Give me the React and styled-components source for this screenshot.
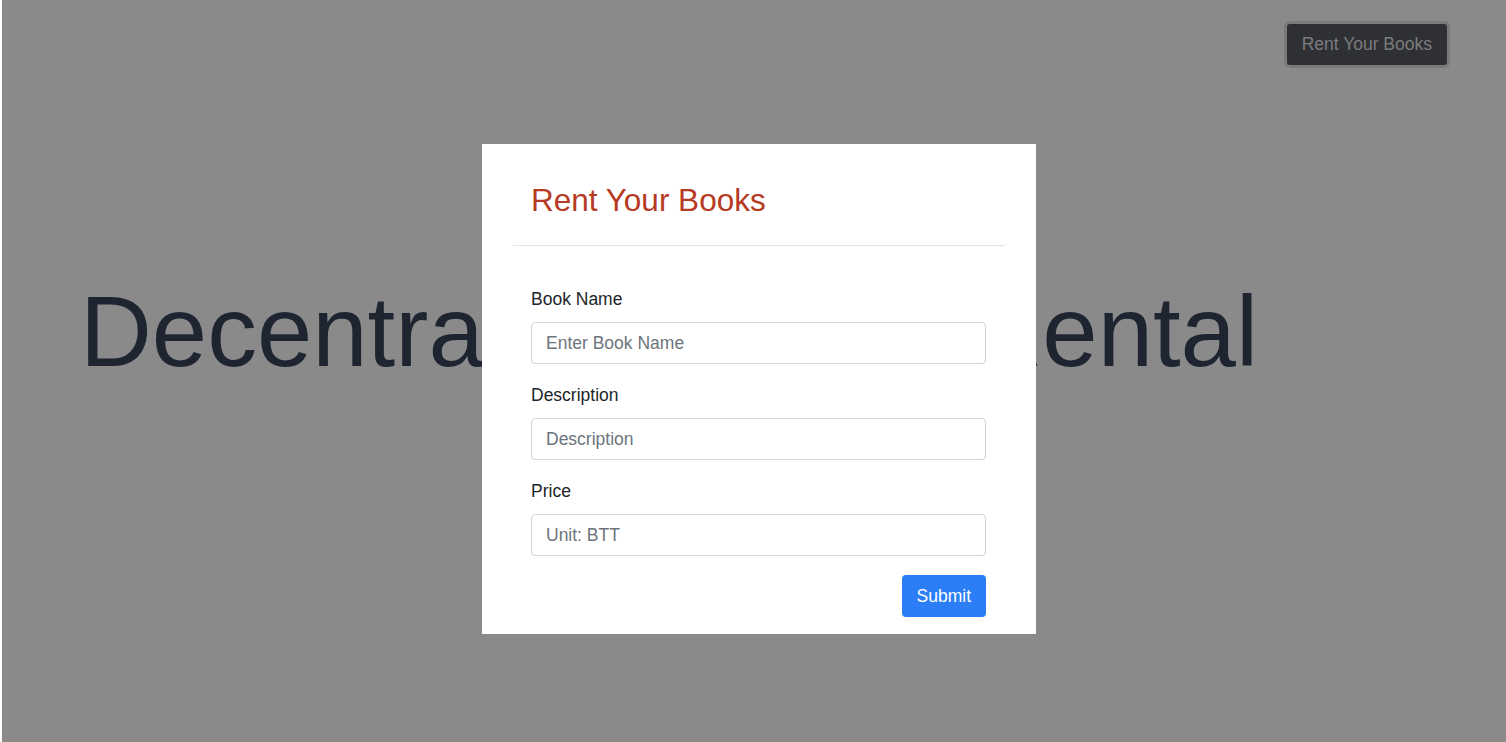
import React from "react";
import styled, { createGlobalStyle } from "styled-components";

const Global = createGlobalStyle`
  html, body { margin: 0; padding: 0; }
  body {
    font-family: "Liberation Sans", Arial, Helvetica, sans-serif;
    background: #ffffff;
  }
  * { box-sizing: border-box; }
`;

const Page = styled.div`
  position: relative;
  min-height: 742px;
  margin-left: 2px;
  background: #8a8a8a;
  display: flex;
  flex-direction: column;
  overflow: hidden;
`;

const TopBar = styled.header`
  display: flex;
  justify-content: flex-end;
  padding: 21px 56px 0 0;
`;

const NavButton = styled.button`
  height: 47px;
  padding: 0 15px;
  border: 3px solid #7a7a7a;
  border-radius: 6px;
  background: #2e3034;
  color: #7c7c7d;
  font-family: inherit;
  font-size: 17.5px;
`;

const Hero = styled.h1`
  margin: 214px 0 0 78px;
  font-weight: 400;
  font-size: 99.5px;
  line-height: 1;
  color: #1e2530;
  white-space: nowrap;
`;

const Overlay = styled.div`
  position: absolute;
  inset: 0;
  display: flex;
  justify-content: center;
  align-items: flex-start;
  padding-top: 144px;
  padding-left: 10px;
`;

const Modal = styled.div`
  width: 554px;
  background: #ffffff;
  display: flex;
  flex-direction: column;
`;

const ModalHeader = styled.div`
  margin: 0 31px;
  padding: 37px 18px 26px;
  border-bottom: 1px solid #e3e3e3;
`;

const Title = styled.h2`
  margin: 0;
  font-weight: 400;
  font-size: 31.5px;
  line-height: 38px;
  color: #b73a22;
`;

const Body = styled.form`
  padding: 42px 50px 17px 49px;
  display: flex;
  flex-direction: column;
`;

const Field = styled.div`
  display: flex;
  flex-direction: column;
  margin-bottom: 20px;
`;

const Label = styled.label`
  font-size: 17.5px;
  line-height: 22px;
  color: #212529;
  margin-bottom: 12px;
`;

const Input = styled.input`
  height: 42px;
  width: 100%;
  padding: 0 14px;
  border: 1px solid #ced4da;
  border-radius: 4px;
  font-family: inherit;
  font-size: 17.5px;
  color: #495057;
  background: #fff;
  &::placeholder { color: #6c757d; }
`;

const Actions = styled.div`
  display: flex;
  justify-content: flex-end;
  margin-top: -1px;
`;

const Submit = styled.button`
  height: 42px;
  padding: 0 15px;
  border: none;
  border-radius: 4px;
  background: #2b7ef6;
  color: #fff;
  font-family: inherit;
  font-size: 17.5px;
`;

const fields = [
  { label: "Book Name", placeholder: "Enter Book Name" },
  { label: "Description", placeholder: "Description" },
  { label: "Price", placeholder: "Unit: BTT" },
];

export default function App() {
  return (
    <>
      <Global />
      <Page>
        <TopBar>
          <NavButton>Rent Your Books</NavButton>
        </TopBar>
        <Hero>Decentralized Book Rental</Hero>
        <Overlay>
          <Modal>
            <ModalHeader>
              <Title>Rent Your Books</Title>
            </ModalHeader>
            <Body onSubmit={(e) => e.preventDefault()}>
              {fields.map((f) => (
                <Field key={f.label}>
                  <Label>{f.label}</Label>
                  <Input placeholder={f.placeholder} />
                </Field>
              ))}
              <Actions>
                <Submit type="submit">Submit</Submit>
              </Actions>
            </Body>
          </Modal>
        </Overlay>
      </Page>
    </>
  );
}
